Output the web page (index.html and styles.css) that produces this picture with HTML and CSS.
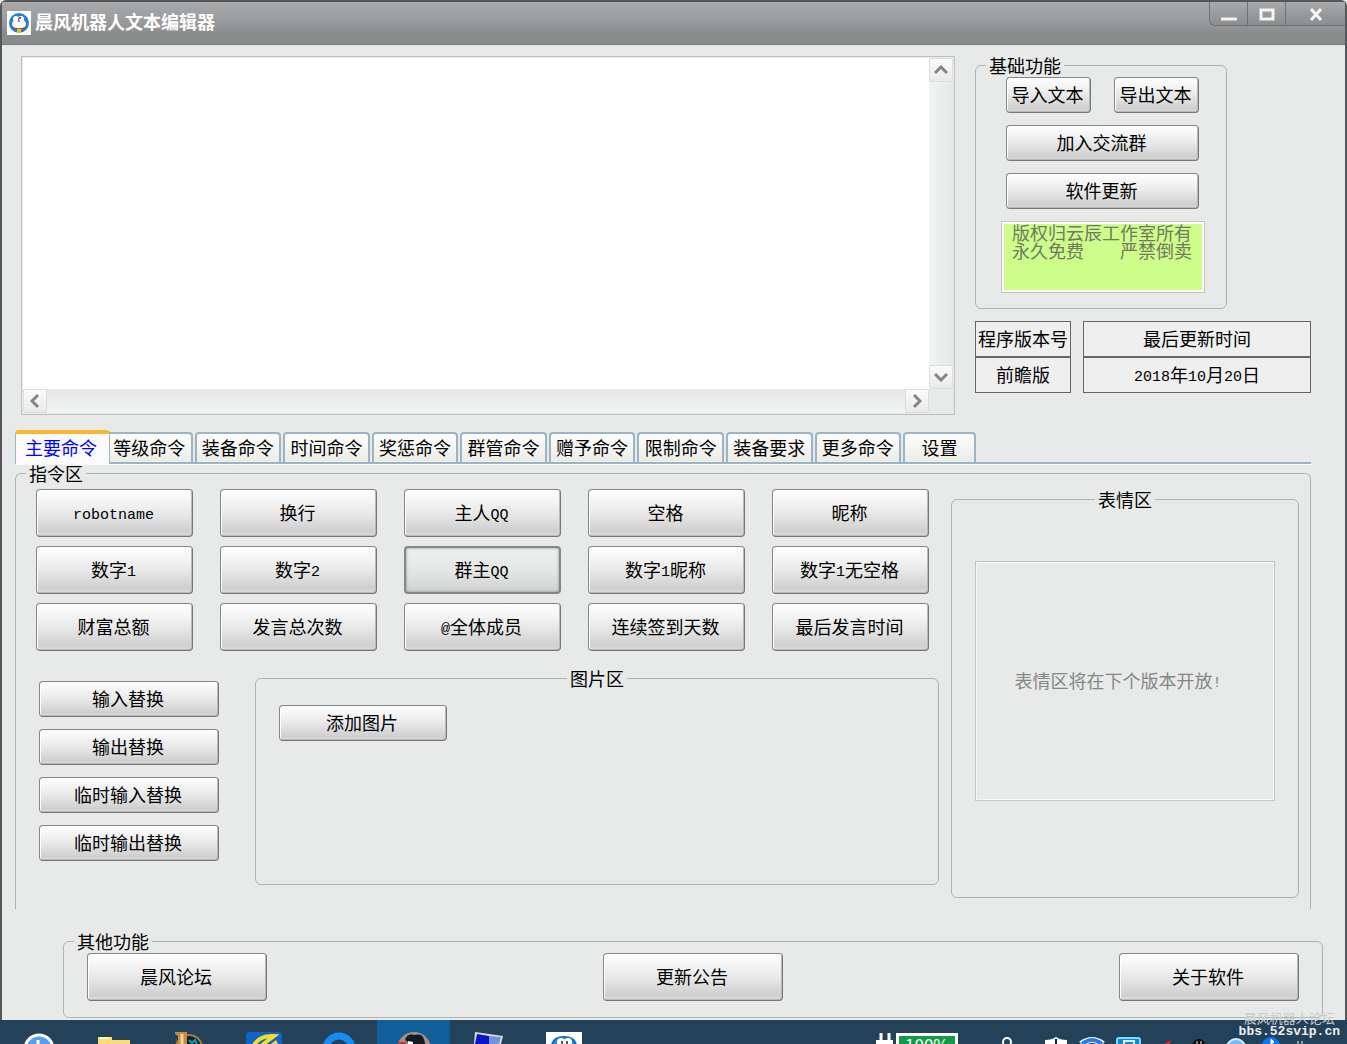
FILE: index.html
```html
<!DOCTYPE html>
<html lang="zh-CN">
<head>
    <meta charset="UTF-8">
    <meta name="viewport" content="width=device-width, initial-scale=1.0">
    <title>晨风机器人文本编辑器</title>
    <link rel="stylesheet" href="styles.css">
</head>
<body>
    <div class="window">
        <header class="titlebar">
            <svg class="app-icon" width="24" height="24" viewBox="0 0 24 24">
                <rect width="24" height="24" fill="#fff"/>
                <circle cx="12" cy="12" r="10" fill="#2380cf"/>
                <ellipse cx="12" cy="13" rx="7" ry="5" fill="#fff"/>
                <circle cx="9" cy="8" r="3" fill="#fff"/>
                <circle cx="14" cy="8" r="3" fill="#fff"/>
                <path d="M6 17q6 2 12 0" fill="none" stroke="#d33" stroke-width="1.5"/>
                <path d="M11 8h1M13 6v2" stroke="#333" stroke-width="1.5"/>
                <circle cx="12" cy="10" r="1" fill="#d33"/>
                <rect x="10" y="18" width="4" height="4" fill="#c5ce2b"/>
            </svg>
            <h1>晨风机器人文本编辑器</h1>
            <div class="window-buttons">
                <button class="minimize" aria-label="最小化"><svg width="16" height="14" viewBox="0 0 16 14"><path d="M0 11h16" stroke="#f4f4f4" stroke-width="3"/></svg></button>
                <button class="maximize" aria-label="最大化"><svg width="16" height="14" viewBox="0 0 16 14"><rect x="2" y="2" width="12" height="9" fill="none" stroke="#f4f4f4" stroke-width="3"/></svg></button>
                <button class="close" aria-label="关闭"><svg width="16" height="14" viewBox="0 0 16 14"><path d="M3 1l10 11M13 1L3 12" stroke="#f4f4f4" stroke-width="3"/></svg></button>
            </div>
        </header>

        <main>
            <section class="top">
                <div class="editor">
                    <textarea aria-label="文本"></textarea>
                    <div class="scroll-y">
                        <button aria-label="向上"><svg width="14" height="10" viewBox="0 0 14 10"><path d="M1 8l6-6 6 6" fill="none" stroke="#858585" stroke-width="3"/></svg></button>
                        <button aria-label="向下"><svg width="14" height="10" viewBox="0 0 14 10"><path d="M1 2l6 6 6-6" fill="none" stroke="#858585" stroke-width="3"/></svg></button>
                    </div>
                    <div class="scroll-x">
                        <button aria-label="向左"><svg width="10" height="14" viewBox="0 0 10 14"><path d="M8 1L2 7l6 6" fill="none" stroke="#858585" stroke-width="3"/></svg></button>
                        <button aria-label="向右"><svg width="10" height="14" viewBox="0 0 10 14"><path d="M2 1l6 6-6 6" fill="none" stroke="#858585" stroke-width="3"/></svg></button>
                    </div>
                </div>

                <aside>
                    <fieldset class="group basic">
                        <legend>基础功能</legend>
                        <div class="basic-buttons">
                            <button class="btn">导入文本</button>
                            <button class="btn">导出文本</button>
                            <button class="btn wide">加入交流群</button>
                            <button class="btn wide">软件更新</button>
                        </div>
                        <p class="copyright">版权归云辰工作室所有<br>永久免费　　严禁倒卖</p>
                    </fieldset>
                    <div class="versions">
                        <div class="version">
                            <div>程序版本号</div>
                            <div>前瞻版</div>
                        </div>
                        <div class="version updated">
                            <div>最后更新时间</div>
                            <div><span class="latin">2018</span>年<span class="latin">10</span>月<span class="latin">20</span>日</div>
                        </div>
                    </div>
                </aside>
            </section>

            <nav class="tabs">
                <button class="tab active">主要命令</button>
                <button class="tab">等级命令</button>
                <button class="tab">装备命令</button>
                <button class="tab">时间命令</button>
                <button class="tab">奖惩命令</button>
                <button class="tab">群管命令</button>
                <button class="tab">赠予命令</button>
                <button class="tab">限制命令</button>
                <button class="tab">装备要求</button>
                <button class="tab">更多命令</button>
                <button class="tab settings">设置</button>
            </nav>

            <fieldset class="group panel">
                <legend>指令区</legend>
                <div class="panel-body">
                    <div class="commands">
                        <div class="command-grid">
                            <button class="btn"><span class="latin">robotname</span></button>
                            <button class="btn">换行</button>
                            <button class="btn">主人<span class="latin">QQ</span></button>
                            <button class="btn">空格</button>
                            <button class="btn">昵称</button>
                            <button class="btn">数字<span class="latin">1</span></button>
                            <button class="btn">数字<span class="latin">2</span></button>
                            <button class="btn pressed">群主<span class="latin">QQ</span></button>
                            <button class="btn">数字<span class="latin">1</span>昵称</button>
                            <button class="btn">数字<span class="latin">1</span>无空格</button>
                            <button class="btn">财富总额</button>
                            <button class="btn">发言总次数</button>
                            <button class="btn"><span class="latin">@</span>全体成员</button>
                            <button class="btn">连续签到天数</button>
                            <button class="btn">最后发言时间</button>
                        </div>
                        <div class="lower">
                            <div class="replace">
                                <button class="btn">输入替换</button>
                                <button class="btn">输出替换</button>
                                <button class="btn">临时输入替换</button>
                                <button class="btn">临时输出替换</button>
                            </div>
                            <fieldset class="group pictures">
                                <legend>图片区</legend>
                                <button class="btn">添加图片</button>
                            </fieldset>
                        </div>
                    </div>
                    <fieldset class="group faces">
                        <legend>表情区</legend>
                        <p class="faces-note">表情区将在下个版本开放<span class="latin">!</span></p>
                    </fieldset>
                </div>
            </fieldset>

            <fieldset class="group other">
                <legend>其他功能</legend>
                <div class="other-buttons">
                    <button class="btn">晨风论坛</button>
                    <button class="btn">更新公告</button>
                    <button class="btn">关于软件</button>
                </div>
            </fieldset>
        </main>
    </div>

    <footer class="taskbar">
        <div class="tasks">
            <span class="task"><svg width="36" height="12" viewBox="0 0 36 12"><circle cx="18" cy="17" r="14" fill="#5b9ded" stroke="#fff" stroke-width="3"/><path d="M17 8v8" stroke="#fff" stroke-width="3"/></svg></span>
            <span class="task"><svg width="36" height="12" viewBox="0 0 36 12"><path d="M2 5h14v3h18v4H2z" fill="#fbdc78"/><path d="M4 6h9" stroke="#fff5cd" stroke-width="2"/></svg></span>
            <span class="task"><svg width="36" height="12" viewBox="0 0 36 12"><circle cx="18" cy="16" r="13" fill="#082435" stroke="#b17a36" stroke-width="2"/><path d="M18 8l3 3 3-3 2 4" stroke="#1799a8" fill="none" stroke-width="2"/><path d="M4 0h12v12H7V4L4 2z" fill="#c58a43"/><path d="M11 2v10" stroke="#f4d29b" stroke-width="3"/></svg></span>
            <span class="task"><svg width="36" height="12" viewBox="0 0 36 12"><rect width="36" height="30" rx="4" fill="#1262cb"/><path d="M8 13Q14 3 28 4L16 13" fill="none" stroke="#f4dc2c" stroke-width="4"/><path d="M30 8l-5 4h7z" fill="#f4dc2c"/></svg></span>
            <span class="task"><svg width="36" height="12" viewBox="0 0 36 12"><circle cx="18" cy="17" r="13" fill="none" stroke="#168bf0" stroke-width="7"/></svg></span>
            <span class="task running"><svg width="36" height="12" viewBox="0 0 36 12"><circle cx="18" cy="17" r="17" fill="#a2908f"/><path d="M9 8q2-7 10-5 9-3 10 9H14z" fill="#171922"/><path d="M2 10h8v2H1z" fill="#bd3936"/><path d="M12 9l5 1v2h-5z" fill="#fff"/></svg></span>
            <span class="task"><svg width="36" height="12" viewBox="0 0 36 12"><path d="M4 0l28 4-2 8H3z" fill="#ddd"/><path d="M6 2l12 2v8H4z" fill="#0a15c8"/><path d="M18 4l12 1-2 7H18z" fill="#7292dc"/></svg></span>
            <span class="task"><svg width="36" height="12" viewBox="0 0 36 12"><rect width="36" height="12" fill="#fff"/><path d="M6 12Q8 5 18 5t12 7" fill="#2685d4" stroke="#176eaf" stroke-width="2"/><ellipse cx="15" cy="10" rx="4" ry="4" fill="#fff"/><ellipse cx="22" cy="10" rx="4" ry="4" fill="#fff"/><path d="M16 9v3M21 9v3" stroke="#222" stroke-width="1.5"/></svg></span>
        </div>
        <div class="tray">
            <svg width="20" height="12" viewBox="0 0 20 12"><path d="M5 1v8M13 1v8" stroke="#fff" stroke-width="3"/><path d="M0 8h17v4H0z" fill="#fff"/></svg>
            <span class="battery">100%</span>
            <svg class="person" width="36" height="12" viewBox="0 0 36 12"><circle cx="17" cy="10" r="4" fill="none" stroke="#fff" stroke-width="2"/></svg>
            <svg width="36" height="12" viewBox="0 0 36 12"><path d="M7 8q7 0 11-3 4 3 11 3v4H7z" fill="#fff"/><path d="M18 7v5" stroke="#123" stroke-width="2"/></svg>
            <svg width="36" height="12" viewBox="0 0 36 12"><path d="M7 12q11-8 22 0" fill="none" stroke="#fff" stroke-width="6"/><path d="M8 12q10-8 20 0" fill="none" stroke="#2f78e8" stroke-width="4"/></svg>
            <svg width="36" height="12" viewBox="0 0 36 12"><rect x="7" y="6" width="23" height="20" rx="2" fill="#1387ca" stroke="#81d8ff" stroke-width="2"/><path d="M14 12V9h10v3" fill="none" stroke="#d9f4ff" stroke-width="2"/></svg>
            <svg width="36" height="12" viewBox="0 0 36 12"><path d="M18 12l7-4-2 4z" fill="#e5252d"/></svg>
            <svg width="36" height="12" viewBox="0 0 36 12"><circle cx="17" cy="13" r="6" fill="#080808"/><path d="M15 9v3M19 9v3" stroke="#fff"/></svg>
            <svg width="36" height="12" viewBox="0 0 36 12"><circle cx="18" cy="16" r="9" fill="#7eb7f2" stroke="#dceeff" stroke-width="2"/></svg>
            <svg width="36" height="12" viewBox="0 0 36 12"><circle cx="17" cy="14" r="9" fill="#1374ee"/><path d="M17 7v5l3-2z" fill="#fff" stroke="#fff"/></svg>
            <svg width="36" height="12" viewBox="0 0 36 12"><path d="M8 9v3M12 9v3" stroke="#fff"/></svg>
        </div>
        <div class="watermark">
            <span>晨风机器人论坛</span>
            <a href="#">bbs.52svip.cn</a>
        </div>
    </footer>
</body>
</html>
```
FILE: styles.css
```css
* {
    box-sizing: border-box;
}

body {
    font-family: "Noto Sans CJK SC", sans-serif;
    font-size: 18px;
    line-height: 18px;
    color: #000;
    background: #e8eae9;
    margin: 0;
    min-height: 100vh;
    display: flex;
    flex-direction: column;
}

button {
    font: inherit;
    color: inherit;
    padding: 0;
    margin: 0;
    white-space: nowrap;
}

p {
    margin: 0;
}

/* half-width letters and digits */
.latin {
    font-family: "Liberation Mono", monospace;
    font-size: 15px;
    line-height: 0;
    vertical-align: 1px;
}

.window {
    flex: 1;
    border: 2px solid #555759;
    border-width: 2px 2px 0;
    border-radius: 6px 6px 0 0;
}

/* Title bar */
.titlebar {
    height: 43px;
    display: flex;
    align-items: center;
    gap: 4px;
    padding-left: 5px;
    background: linear-gradient(#a9aaab, #98999a 50%, #8a8b8c 75%, #8a8b8c);
    border-bottom: 1px solid #7c7d7e;
}

.titlebar h1 {
    flex: 1;
    margin: 0;
    padding-bottom: 4px;
    font-size: 18px;
    line-height: 18px;
    font-weight: bold;
    color: #fff;
}

.window-buttons {
    display: flex;
    align-self: flex-start;
    height: 24px;
    border: 1px solid #6f7071;
    border-top: 0;
    border-right: 0;
    border-radius: 0 0 0 6px;
}

.window-buttons button {
    width: 38px;
    border: 0;
    border-right: 1px solid #6f7071;
    background: linear-gradient(#a9aaab, #8b8c8d);
}

.window-buttons .minimize {
    border-bottom-left-radius: 6px;
}

.window-buttons .close {
    width: 59px;
    border-right: 0;
}

main {
    padding: 11px 34px 0 13px;
}

.btn {
    height: 36px;
    padding: 0 2px 3px 0;
    border: 1px solid #868787;
    border-right-color: #777;
    border-bottom-color: #777;
    border-radius: 4px;
    background: linear-gradient(#fff, #e9e9e9 50%, #cfcfcf 90%, #dedede);
    box-shadow: inset 1px 1px 0 #fff, inset -1px -1px 0 #b8b9b9;
}

.btn.pressed {
    border: 2px solid #858687;
    background: linear-gradient(#eef0f0, #e5e7e7 50%, #d0d1d1);
    box-shadow: inset 0 0 3px #888;
}

.group {
    margin: 0;
    padding: 0 1px;
    min-width: 0;
    border: 1px solid #b2b4b3;
    border-radius: 6px;
}

.group legend {
    margin-left: 9px;
    padding: 0 3px;
}

/* Editor and the column next to it */
.top {
    display: flex;
    gap: 20px;
    margin-left: 6px;
    margin-bottom: 15px;
}

.editor {
    flex: 1;
    height: 359px;
    display: grid;
    grid-template-columns: 1fr 24px;
    grid-template-rows: 1fr 24px;
    border: 1px solid #bfc1c0;
    padding: 1px;
    background: #e8eae9;
}

.editor textarea {
    border: 0;
    margin: 0;
    padding: 4px;
    resize: none;
    outline: 0;
    overflow: hidden;
    background: #fff;
    font: inherit;
}

.scroll-y,
.scroll-x {
    display: flex;
    justify-content: space-between;
    background: linear-gradient(90deg, #f3f4f4, #e5e8e6);
}

.scroll-y {
    flex-direction: column;
}

.scroll-x {
    background: linear-gradient(#e5e8e6, #f3f4f4);
}

.scroll-y button,
.scroll-x button {
    width: 24px;
    height: 24px;
    display: flex;
    align-items: center;
    justify-content: center;
    border: 1px solid #dcdedd;
    border-radius: 2px;
    background: linear-gradient(#fafafa, #e9ebea);
}

aside {
    width: 336px;
}

.basic {
    width: 252px;
    height: 253px;
}

.basic-buttons {
    display: grid;
    grid-template-columns: 1fr 1fr;
    gap: 12px 23px;
    margin: 3px 26px 12px 29px;
}

.basic .wide {
    grid-column: span 2;
}

.copyright {
    margin: 0 20px 0 24px;
    height: 72px;
    padding: 1px 6px 1px 4px;
    text-align: center;
    color: #6f7a60;
    background: #cffd8b;
    border: 1px solid #c3c5c4;
    box-shadow: inset 0 0 0 2px #fff;
}

.versions {
    display: flex;
    gap: 12px;
    margin-top: 12px;
}

.version {
    width: 96px;
    text-align: center;
    white-space: nowrap;
}

.version.updated {
    flex: 1;
}

.version div {
    height: 36px;
    line-height: 32px;
    border: 1px solid #666;
    background: #efefef;
}

/* Tabs */
.tabs {
    display: flex;
    align-items: flex-end;
    gap: 2px;
    height: 34px;
    padding-right: 335px;
    border-bottom: 2px solid #9cb4c3;
    box-shadow: 0 1px 0 #f8f9f9;
}

.tab {
    flex: 1;
    height: 30px;
    padding-bottom: 2px;
    border: 2px solid #9cb4c3;
    border-bottom: 0;
    border-radius: 4px 4px 0 0;
    background: linear-gradient(#fdfdfd, #ecece6);
}

.tab.active {
    flex: 0 0 95px;
    height: 34px;
    padding: 0 3px 4px 0;
    margin-right: -6px;
    margin-bottom: -2px;
    position: relative;
    color: #00f;
    background: #fbfbff;
    border-top: 4px solid #fbb62c;
    border-left-width: 1px;
    border-right-width: 1px;
}

.tab.settings {
    flex: 0 0 73px;
}

/* Main panel, open at the bottom */
.panel {
    height: 445px;
    border-bottom: 0;
    border-radius: 6px 6px 0 0;
}

.panel-body {
    display: flex;
    gap: 22px;
    padding: 7px 10px 0 19px;
}

.commands {
    flex: 1;
}

.command-grid {
    display: grid;
    grid-template-columns: repeat(5, 1fr);
    gap: 9px 27px;
}

.command-grid .btn,
.other .btn {
    height: 48px;
}

.lower {
    display: flex;
    gap: 36px;
    margin: 18px -10px 0 3px;
}

.replace {
    width: 180px;
    display: flex;
    flex-direction: column;
    gap: 12px;
    padding-top: 12px;
}

.pictures {
    flex: 1;
    height: 216px;
}

.pictures legend,
.faces legend {
    margin: 0 auto;
}

.pictures .btn {
    width: 168px;
    margin: 18px 22px;
}

.faces {
    width: 348px;
    height: 408px;
    margin-top: 1px;
}

.faces-note {
    height: 240px;
    margin: 53px 22px 0;
    padding-right: 14px;
    line-height: 236px;
    text-align: center;
    color: #858786;
    border: 1px solid #c3c5c4;
    box-shadow: inset 0 0 0 1px #f6f7f7;
}

.other {
    margin: 23px -12px 0 48px;
    height: 86px;
}

.other-buttons {
    display: flex;
    justify-content: space-between;
    padding: 3px 22px 0;
}

.other .btn {
    width: 180px;
}

/* Taskbar */
.taskbar {
    position: relative;
    height: 24px;
    display: flex;
    justify-content: space-between;
    background: #234159;
}

.tasks {
    display: flex;
    gap: 2px;
    padding-left: 2px;
}

.task {
    width: 73px;
    height: 24px;
    padding-top: 12px;
    display: flex;
    justify-content: center;
}

.task.running {
    background: #115e9a;
}

.tray {
    height: 24px;
    display: flex;
    padding: 12px 21px 0 0;
    overflow: hidden;
}

.battery {
    width: 62px;
    height: 24px;
    margin-top: 1px;
    border: 3px solid #fff;
    background: #159a49;
    color: #fff;
    font-size: 17px;
    text-align: center;
}

.person {
    margin: 0 12px 0 32px;
}

.watermark {
    position: absolute;
    right: 7px;
    bottom: 5px;
    display: flex;
    flex-direction: column;
    align-items: center;
    color: #c9cccd;
    font-size: 13px;
    line-height: 14px;
}

.watermark a {
    color: #eee;
    font-family: "Liberation Mono", monospace;
    font-weight: bold;
    text-decoration: none;
}
```
